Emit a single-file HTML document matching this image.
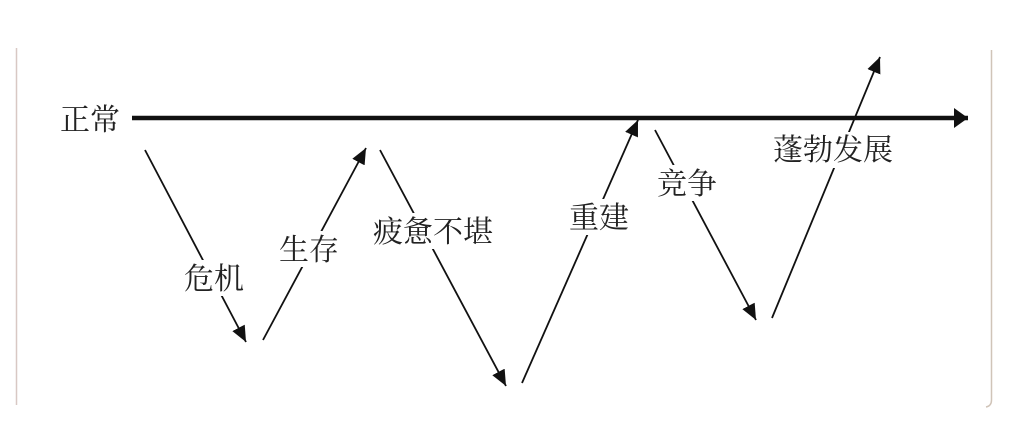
<!DOCTYPE html>
<html><head><meta charset="utf-8"><style>
body{margin:0;width:1025px;height:440px;background:#fff;overflow:hidden}
svg text{font-family:"Noto Serif CJK SC","Liberation Serif",serif;font-size:30px;fill:#222}
</style></head><body>
<svg width="1025" height="440" viewBox="0 0 1025 440" xmlns="http://www.w3.org/2000/svg">
<defs>
<marker id="b" markerWidth="14" markerHeight="20" refX="14" refY="10" orient="auto" markerUnits="userSpaceOnUse"><path d="M0,0 L14,10 L0,20 Z" fill="#111"/></marker>
<marker id="s" markerWidth="16" markerHeight="14" refX="16" refY="7" orient="auto" markerUnits="userSpaceOnUse"><path d="M0,0 L16,7 L0,14 Z" fill="#111"/></marker></defs>
<line x1="16.5" y1="48" x2="16.5" y2="405" stroke="#d8c8c4" stroke-width="1.5"/>
<path d="M991.5 50 V400 Q991.5 406 986 407" stroke="#d0c4b8" stroke-width="1.5" fill="none"/>
<g stroke="#111" stroke-width="1.8" fill="none">
<line x1="145" y1="150" x2="246" y2="342" marker-end="url(#s)"/>
<line x1="263" y1="340" x2="366" y2="148" marker-end="url(#s)"/>
<line x1="380" y1="150" x2="506" y2="386" marker-end="url(#s)"/>
<line x1="522" y1="383" x2="638" y2="120" marker-end="url(#s)"/>
<line x1="655" y1="130" x2="756" y2="320" marker-end="url(#s)"/>
<line x1="772" y1="318" x2="880" y2="57" marker-end="url(#s)"/>
</g>
<line x1="132" y1="118" x2="968" y2="118" stroke="#111" stroke-width="4.5" marker-end="url(#b)"/>
<g fill="#fff">
<rect x="182" y="260" width="66" height="36" />
<rect x="277" y="231" width="68" height="36" />
<rect x="371" y="213" width="128" height="36" />
<rect x="567" y="199" width="68" height="36" />
<rect x="655" y="165" width="66" height="36" />
<rect x="770" y="132" width="130" height="36" />
</g>
<text x="184" y="289">危机</text>
<text x="279" y="260">生存</text>
<text x="373" y="242">疲惫不堪</text>
<text x="569" y="228">重建</text>
<text x="657" y="194">竞争</text>
<text x="773" y="160">蓬勃发展</text>
<text x="60" y="130">正常</text>
</svg>
</body></html>
